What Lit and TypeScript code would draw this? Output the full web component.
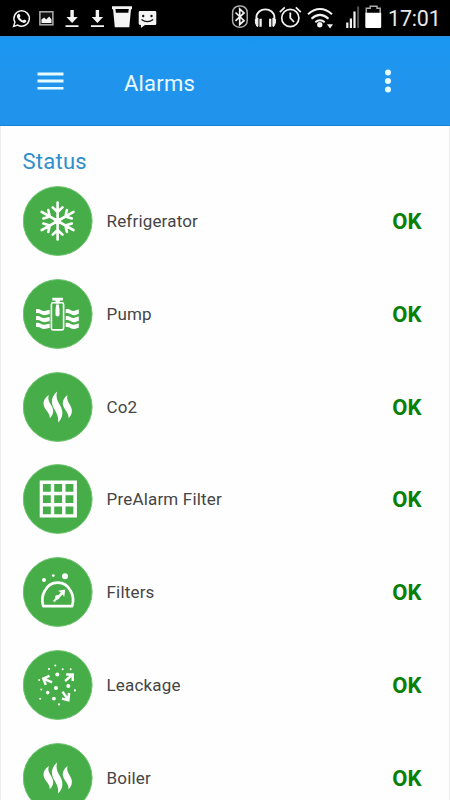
import { LitElement, html, svg, css } from "lit";
import { customElement, property } from "lit/decorators.js";

const steam = svg`
  <path d="M26.3 23C19.5 28 20.3 33 23 37C25.7 41 27.5 42.5 27.2 46.3C31.8 42 31.4 37.500 28.6 33C26 29 25.2 27 26.3 23Z"/>
  <path d="M34.6 19.400C27.500 25.500 28.800 32 32 37.500C34.600 42 36.200 45 35.600 50.600C41.200 45 40.700 39 37.700 33.500C34.800 28.500 33.100 25 34.600 19.400Z"/>
  <path d="M45 23C38.800 28 39.600 33 42.300 37C44.800 41 46.300 42.500 46 46.300C50.400 42 50.100 37.500 47.500 33C45.100 29 44 27 45 23Z"/>`;

const arms = [0, 60, 120, 180, 240, 300].map(
  (a) => svg`<path transform="rotate(${a} 35.1 35)" d="M35.1 35V16.6M35.1 26L30.2 21.4M35.1 26L40 21.4"/>`
);

const waves = [30.2, 37.2, 44].map(
  (y) => svg`<path d="M13.500 ${y}c4-1.200 5 2.200 8.400 1.800 2.400-.2 3-1.200 5.300-1v4.300c-2.300-.2-3 .9-5.300 1-3.400.2-4.400-3-8.400-2Z"/>
  <path d="M43.200 ${y}c4-1.200 5 2.200 8.200 1.800 2.200-.2 2.800-1.600 4.900-1.400v4.300c-2.100-.2-2.800 1.300-4.900 1.400-3.200.2-4.200-3-8.200-2Z"/>`
);

const dots: [number, number, number][] = [
  [32.8, 15.4, 1], [26.5, 19, 1.1], [40.2, 19.3, 1], [48.2, 19.3, 1],
  [34.8, 24.4, 2], [16.6, 30, 1], [45.8, 35.9, 2], [33.5, 38, 2],
  [18.8, 39.4, 1], [25.2, 42.6, 1.8], [52.4, 40.4, 1.1], [31.4, 48.6, 1.9],
  [17.7, 48.7, 1], [36.5, 54.4, 1.1],
];

const glyphs: Record<string, unknown> = {
  snow: svg`<g fill="none" stroke="#fff" stroke-width="2.6" stroke-linecap="round">${arms}</g>
    <circle cx="35.1" cy="35" r="3.2"/>`,
  pump: svg`${waves}
    <rect x="28.9" y="23.8" width="12.2" height="27.1" rx="1.6" fill="none" stroke="#fff" stroke-width="1.6"/>
    <path d="M29.8 18.8h10.6v2.6h-3.2v3h-4.2v-3h-3.2z"/>
    <path d="M33.6 25.5h2.7l.7 5v5.2q0 1.800-2 1.800t-2-1.800v-5.200z"/>`,
  steam,
  grid: svg`<path fill-rule="evenodd" d="M17.2 16.6h37.2v37h-37.2z
    M20.4 20v7.7h7.9v-7.7z M31.7 20v7.7h7.9v-7.7z M43 20v7.7h7.9v-7.7z
    M20.4 31.3v7.7h7.9v-7.7z M31.7 31.3v7.7h7.9v-7.7z M43 31.3v7.7h7.9v-7.7z
    M20.4 42.5v7.7h7.9v-7.7z M31.7 42.5v7.7h7.9v-7.7z M43 42.5v7.7h7.9v-7.7z"/>`,
  gauge: svg`<circle cx="21.5" cy="23.1" r="2"/><circle cx="30.8" cy="18.6" r="1.4"/><circle cx="42.5" cy="19.2" r="3"/>
    <path d="M20.800 49.100C19.300 44.500 19.600 38.500 22.200 34 24.8 28.7 29.6 25.6 35.1 25.6S45.6 28.7 48.2 34C50.800 38.500 51.100 44.500 49.600 49.100Z"
      fill="none" stroke="#fff" stroke-width="2.7" stroke-linejoin="round"/>
    <path d="M31.2 44.5L40.5 35.2" fill="none" stroke="#fff" stroke-width="1.9"/>
    <circle cx="34.8" cy="40.3" r="2.3"/>
    <path d="M35.6 33.8L42.8 32.6L41.7 39.9L40.2 37.6L37.6 40L35.8 38.2L38.3 35.5Z"/>`,
  leak: svg`${dots.map(([x, y, r]) => svg`<circle cx=${x} cy=${y} r=${r}/>`)}
    <g fill="none" stroke="#fff" stroke-width="2.5">
      <path d="M29.6 32.4L20.8 28.6M27 25.8L20.8 28.6L23.3 34.9"/>
      <path d="M42.6 31L50 24.6M43.7 24.5L50.2 24.4L50.3 31"/>
      <path d="M40 41.8L45.5 49.6M39.4 48.6L45.8 50.2L46.6 43"/>
    </g>`,
};

@customElement("status-bar")
class StatusBar extends LitElement {
  static styles = css`
    :host { display: block; height: 36px; background: #000; }
    .bar { display: flex; height: 36px; align-items: flex-start; }
    .art { display: block; flex: none; }
    .time {
      font: 400 21.5px/37px Roboto, sans-serif; color: #e8e8e8; white-space: nowrap;
      letter-spacing: -0.2px;
    }
  `;
  render() {
    return html`<div class="bar">
      <svg class="art" width="160" height="36" viewBox="0 0 160 36" fill="#f4f4f4">
        <path d="M13.6 26.4L14.9 22.2A7.7 7.7 0 1 1 17.7 25.1Z" fill="none" stroke="#f4f4f4" stroke-width="1.5"/>
        <path d="M17.8 14.3q1.3-1.1 2 .3l.7 1.6-.9 1.4q1.2 2 3.2 3l1.4-1.2 2 1.1q.5.6-.5 1.7-1.7 1.4-4.4-.1-3-1.7-4.2-4.6-.7-1.800.7-3.2Z"/>
        <rect x="39.9" y="11.8" width="13" height="13" fill="#111" stroke="#b0b0b0" stroke-width="1.5"/>
        <path d="M41.5 23v-3.6l2.6-2 2.1 2.2 3-3.2 2.3 3V23z"/>
        <path d="M70.4 10h3.4v7h4l-5.700 6-5.700-6h4zM65.500 25.200h13v1.800h-13z"/>
        <path d="M95.700 10h3.400v7h4l-5.700 6-5.700-6h4zM91 25.200h13v1.800H91z"/>
        <path fill-rule="evenodd" d="M112 6.300h20v3h-1l-1.700 18h-14.500L113.100 9.300H112zM115.400 9l.5 3.700h12.400l.5-3.700z"/>
        <path d="M140 11h15q1.300 0 1.300 1.300v11.500q0 1.300-1.300 1.300h-10L140.900 28v-2.900q-2.200 0-2.200-1.300V12.300Q138.700 11 140 11Z"/>
        <circle cx="143.200" cy="16" r="1.200" fill="#111"/><circle cx="151.500" cy="16" r="1.200" fill="#111"/>
        <path d="M141.500 19.500q5.800 4.200 11.700 0" fill="none" stroke="#111" stroke-width="1.300"/>
      </svg>
      <svg class="art" width="228" height="36" viewBox="160 0 228 36" fill="none" stroke="#f2f2f2">
        <rect x="232.600" y="6" width="14.600" height="21.200" rx="6.500" stroke="#aaa" stroke-width="1.500"/>
        <path d="M235.500 12.500L244 20.700L239.700 24.500V9L244 12.900L235.500 20.900" stroke-width="1.700"/>
        <path d="M256.400 21V17.500C256.400 6.700 274.400 6.700 274.400 17.500V21" stroke-width="1.900"/>
        <path d="M255.300 19.500q-.4 4 1.600 6.800h1v-8.200zM275.500 19.500q.4 4-1.600 6.800h-1v-8.200z" fill="#f2f2f2"/>
        <path d="M260.600 18.800v8M270.200 18.800v8" stroke-width="2.300"/>
        <circle cx="290.300" cy="18" r="8.600" stroke-width="1.700"/>
        <path d="M290.300 12.500V18l3.700 4" stroke-width="1.800"/>
        <path d="M279.800 12.200l5-4.800M300.800 12.200l-5-4.800" stroke-width="1.700"/>
        <path d="M308 14.200Q320 3.800 332 14.200M311.500 18.800Q320 11 328.500 18.800M315.300 22.300Q320 18.300 324.700 22.300" stroke-width="2"/>
        <circle cx="319.800" cy="24.800" r="2.700" fill="#f2f2f2" stroke="none"/>
        <path d="M327 24.300h6l-3 4.200z" fill="#f2f2f2" stroke="none"/>
        <path d="M347.300 22.500V28M350.900 18.500V28M354.500 11.500V28" stroke-width="2.200"/>
        <path d="M358.100 6.500V28" stroke="#555" stroke-width="2"/>
        <path d="M366.300 13V8.300H370.200V6.200H377V8.300H380.200V13" stroke="#aaa" stroke-width="1.500"/>
        <path d="M365.300 12.800H381.200V27q0 1-1 1H366.300q-1 0-1-1z" fill="#fff" stroke="none"/>
      </svg>
      <div class="time">17:01</div>
    </div>`;
  }
}

@customElement("app-header")
class AppHeader extends LitElement {
  static styles = css`
    :host { display: block; }
    .head {
      display: flex; align-items: flex-start; height: 89.500px; box-sizing: border-box;
      background: linear-gradient(#1a97f3, #2094ec 50%);
      border-top: 1px solid #2f8fd8; border-bottom: 1px solid #1783d8;
    }
    .menu { width: 27px; height: 18px; margin: 34.500px 0 0 37px; display: block; }
    .title {
      flex: 1; padding-left: 60px; margin-top: 34px;
      font: 400 22px/26px Roboto, sans-serif; letter-spacing: 0.200px; color: #e9fbff;
    }
    .more { width: 8px; height: 24px; margin: 32px 58px 0 0; display: block; }
  `;
  render() {
    return html`<div class="head">
      <svg class="menu" viewBox="0 0 27 18" fill="#e6fbff"><path d="M.500.500h26v2.900H.500zM.500 7.600h26v2.900H.500zM.500 14.900h26v2.700H.500z"/></svg>
      <div class="title">Alarms</div>
      <svg class="more" viewBox="0 0 8 24" fill="#e6fbff"><circle cx="4" cy="3.500" r="3"/><circle cx="4" cy="12" r="3"/><circle cx="4" cy="20.500" r="3"/></svg>
    </div>`;
  }
}

@customElement("alarm-row")
class AlarmRow extends LitElement {
  @property() icon = "";
  @property() label = "";
  @property() state = "OK";
  static styles = css`
    :host { display: block; height: 92.800px; }
    .row { display: flex; align-items: center; height: 70px; }
    .icon { width: 70px; height: 70px; flex: none; display: block; }
    .label { flex: 1; padding-left: 14px; font: 400 17px/22px Roboto, sans-serif; letter-spacing: 0.180px; color: #454545; }
    .state { font: 700 22px/26px Roboto, sans-serif; color: #078007; padding-top: 2px; }
  `;
  render() {
    return html`<div class="row">
      <svg class="icon" viewBox="0 0 70 70" fill="#fff">
        <circle cx="34.700" cy="35" r="34.400" fill="#46ad49" stroke="#6cc46d" stroke-width="1"/>
        <g transform="translate(-0.500 0)">${glyphs[this.icon]}</g>
      </svg>
      <div class="label">${this.label}</div>
      <div class="state">${this.state}</div>
    </div>`;
  }
}

@customElement("app-root")
class AppRoot extends LitElement {
  static styles = css`
    :host { display: flex; flex-direction: column; height: 800px; overflow: hidden; background: #fefefe; }
    .body {
      flex: 1; min-height: 0; overflow: hidden; box-sizing: border-box;
      border: solid #ececec; border-width: 0 1px; padding: 23.500px 27.500px 0 21.500px;
    }
    .heading { font: 400 22px/26px Roboto, sans-serif; letter-spacing: 0.250px; color: #2f8fcb; height: 37px; }
  `;
  private rows = [
    ["snow", "Refrigerator"], ["pump", "Pump"], ["steam", "Co2"], ["grid", "PreAlarm Filter"],
    ["gauge", "Filters"], ["leak", "Leackage"], ["steam", "Boiler"],
  ];
  render() {
    return html`<status-bar></status-bar>
      <app-header></app-header>
      <div class="body">
        <div class="heading">Status</div>
        ${this.rows.map(([i, l]) => html`<alarm-row icon=${i} label=${l}></alarm-row>`)}
      </div>`;
  }
}
